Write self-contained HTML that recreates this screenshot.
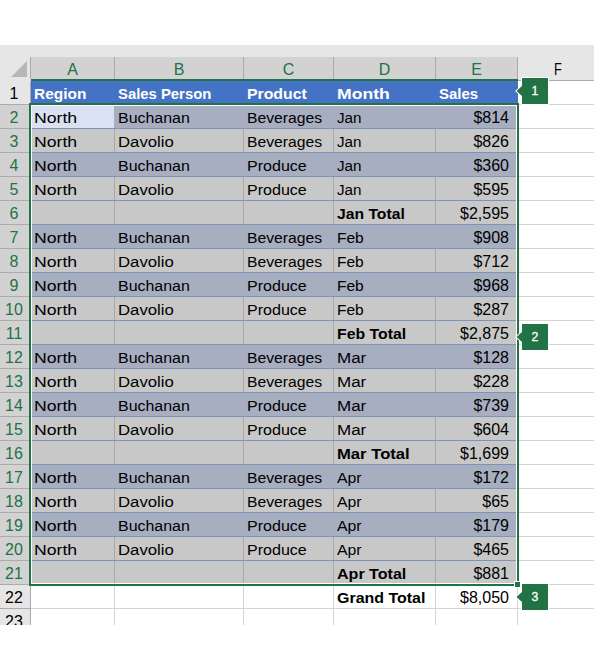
<!DOCTYPE html>
<html><head><meta charset="utf-8"><title>Sheet</title>
<style>
html,body{margin:0;padding:0;background:#fff;}
body{width:608px;height:656px;position:relative;overflow:hidden;font-family:"Liberation Sans",sans-serif;color:#000;}
.a{position:absolute;}
.t{position:absolute;white-space:nowrap;font-size:15.5px;line-height:24px;height:24px;}
.n{font-size:16px;text-align:right;}
.b{font-weight:bold;font-size:15px;}
.rh{position:absolute;left:0;width:28px;text-align:center;font-size:16px;line-height:24px;height:24px;}
.ch{position:absolute;top:57px;height:22px;line-height:25px;text-align:center;font-size:16px;color:#217346;}
.g{color:#217346;}
.bn{width:26px;height:26px;line-height:27px;text-align:center;color:#fff;font-size:12.3px;-webkit-text-stroke:0.3px #fff;}
</style></head><body>

<div class="a" style="left:0;top:45px;width:594px;height:36px;background:#e6e6e6"></div>
<div class="a" style="left:31px;top:57px;width:486px;height:22px;background:#d2d2d2"></div>
<div class="a" style="left:518px;top:80px;width:76px;height:1px;background:#ababab"></div>
<div class="a" style="left:30px;top:57px;width:1px;height:22px;background:#ababab"></div>
<div class="a" style="left:114px;top:57px;width:1px;height:22px;background:#ababab"></div>
<div class="a" style="left:243px;top:57px;width:1px;height:22px;background:#ababab"></div>
<div class="a" style="left:333px;top:57px;width:1px;height:22px;background:#ababab"></div>
<div class="a" style="left:435px;top:57px;width:1px;height:22px;background:#ababab"></div>
<div class="a" style="left:517px;top:57px;width:1px;height:22px;background:#ababab"></div>
<div class="a" style="left:31px;top:79px;width:487px;height:2px;background:#217346"></div>
<svg class="a" style="left:0;top:45px" width="30" height="36"><polygon points="11,32 27,16 27,32" fill="#b7b7b7"/></svg>
<div class="ch" style="left:31px;width:83px;color:#217346;">A</div>
<div class="ch" style="left:115px;width:128px;color:#217346;">B</div>
<div class="ch" style="left:244px;width:89px;color:#217346;">C</div>
<div class="ch" style="left:334px;width:101px;color:#217346;">D</div>
<div class="ch" style="left:436px;width:81px;color:#217346;">E</div>
<div class="ch" style="left:518px;width:76px;color:#000;transform:scaleX(0.8);left:519.5px;">F</div>
<div class="a" style="left:0;top:81px;width:30px;height:544px;background:#e6e6e6"></div>
<div class="a" style="left:0;top:105px;width:30px;height:479px;background:#d2d2d2"></div>
<div class="a" style="left:30px;top:81px;width:1px;height:544px;background:#ababab"></div>
<div class="a" style="left:31px;top:104px;width:563px;height:1px;background:#d4d4d4"></div>
<div class="a" style="left:31px;top:128px;width:563px;height:1px;background:#d4d4d4"></div>
<div class="a" style="left:31px;top:152px;width:563px;height:1px;background:#d4d4d4"></div>
<div class="a" style="left:31px;top:176px;width:563px;height:1px;background:#d4d4d4"></div>
<div class="a" style="left:31px;top:200px;width:563px;height:1px;background:#d4d4d4"></div>
<div class="a" style="left:31px;top:224px;width:563px;height:1px;background:#d4d4d4"></div>
<div class="a" style="left:31px;top:248px;width:563px;height:1px;background:#d4d4d4"></div>
<div class="a" style="left:31px;top:272px;width:563px;height:1px;background:#d4d4d4"></div>
<div class="a" style="left:31px;top:296px;width:563px;height:1px;background:#d4d4d4"></div>
<div class="a" style="left:31px;top:320px;width:563px;height:1px;background:#d4d4d4"></div>
<div class="a" style="left:31px;top:344px;width:563px;height:1px;background:#d4d4d4"></div>
<div class="a" style="left:31px;top:368px;width:563px;height:1px;background:#d4d4d4"></div>
<div class="a" style="left:31px;top:392px;width:563px;height:1px;background:#d4d4d4"></div>
<div class="a" style="left:31px;top:416px;width:563px;height:1px;background:#d4d4d4"></div>
<div class="a" style="left:31px;top:440px;width:563px;height:1px;background:#d4d4d4"></div>
<div class="a" style="left:31px;top:464px;width:563px;height:1px;background:#d4d4d4"></div>
<div class="a" style="left:31px;top:488px;width:563px;height:1px;background:#d4d4d4"></div>
<div class="a" style="left:31px;top:512px;width:563px;height:1px;background:#d4d4d4"></div>
<div class="a" style="left:31px;top:536px;width:563px;height:1px;background:#d4d4d4"></div>
<div class="a" style="left:31px;top:560px;width:563px;height:1px;background:#d4d4d4"></div>
<div class="a" style="left:31px;top:584px;width:563px;height:1px;background:#d4d4d4"></div>
<div class="a" style="left:31px;top:608px;width:563px;height:1px;background:#d4d4d4"></div>
<div class="a" style="left:114px;top:81px;width:1px;height:544px;background:#d4d4d4"></div>
<div class="a" style="left:243px;top:81px;width:1px;height:544px;background:#d4d4d4"></div>
<div class="a" style="left:333px;top:81px;width:1px;height:544px;background:#d4d4d4"></div>
<div class="a" style="left:435px;top:81px;width:1px;height:544px;background:#d4d4d4"></div>
<div class="a" style="left:517px;top:81px;width:1px;height:544px;background:#d4d4d4"></div>
<div class="a" style="left:0;top:104px;width:30px;height:1px;background:#ababab"></div>
<div class="a" style="left:0;top:128px;width:30px;height:1px;background:#ababab"></div>
<div class="a" style="left:0;top:152px;width:30px;height:1px;background:#ababab"></div>
<div class="a" style="left:0;top:176px;width:30px;height:1px;background:#ababab"></div>
<div class="a" style="left:0;top:200px;width:30px;height:1px;background:#ababab"></div>
<div class="a" style="left:0;top:224px;width:30px;height:1px;background:#ababab"></div>
<div class="a" style="left:0;top:248px;width:30px;height:1px;background:#ababab"></div>
<div class="a" style="left:0;top:272px;width:30px;height:1px;background:#ababab"></div>
<div class="a" style="left:0;top:296px;width:30px;height:1px;background:#ababab"></div>
<div class="a" style="left:0;top:320px;width:30px;height:1px;background:#ababab"></div>
<div class="a" style="left:0;top:344px;width:30px;height:1px;background:#ababab"></div>
<div class="a" style="left:0;top:368px;width:30px;height:1px;background:#ababab"></div>
<div class="a" style="left:0;top:392px;width:30px;height:1px;background:#ababab"></div>
<div class="a" style="left:0;top:416px;width:30px;height:1px;background:#ababab"></div>
<div class="a" style="left:0;top:440px;width:30px;height:1px;background:#ababab"></div>
<div class="a" style="left:0;top:464px;width:30px;height:1px;background:#ababab"></div>
<div class="a" style="left:0;top:488px;width:30px;height:1px;background:#ababab"></div>
<div class="a" style="left:0;top:512px;width:30px;height:1px;background:#ababab"></div>
<div class="a" style="left:0;top:536px;width:30px;height:1px;background:#ababab"></div>
<div class="a" style="left:0;top:560px;width:30px;height:1px;background:#ababab"></div>
<div class="a" style="left:0;top:584px;width:30px;height:1px;background:#ababab"></div>
<div class="a" style="left:0;top:608px;width:30px;height:1px;background:#ababab"></div>
<div class="a" style="left:31px;top:81px;width:487px;height:22px;background:#4472c4"></div>
<div class="a" style="left:31px;top:105px;width:486px;height:23px;background:#a7aec0"></div>
<div class="a" style="left:31px;top:128px;width:486px;height:1px;background:#7c93bb"></div>
<div class="a" style="left:31px;top:129px;width:486px;height:23px;background:#c8c8c8"></div>
<div class="a" style="left:114px;top:129px;width:1px;height:23px;background:#a9a9a9"></div>
<div class="a" style="left:243px;top:129px;width:1px;height:23px;background:#a9a9a9"></div>
<div class="a" style="left:333px;top:129px;width:1px;height:23px;background:#a9a9a9"></div>
<div class="a" style="left:435px;top:129px;width:1px;height:23px;background:#a9a9a9"></div>
<div class="a" style="left:31px;top:152px;width:486px;height:1px;background:#7c93bb"></div>
<div class="a" style="left:31px;top:153px;width:486px;height:23px;background:#a7aec0"></div>
<div class="a" style="left:31px;top:176px;width:486px;height:1px;background:#7c93bb"></div>
<div class="a" style="left:31px;top:177px;width:486px;height:23px;background:#c8c8c8"></div>
<div class="a" style="left:114px;top:177px;width:1px;height:23px;background:#a9a9a9"></div>
<div class="a" style="left:243px;top:177px;width:1px;height:23px;background:#a9a9a9"></div>
<div class="a" style="left:333px;top:177px;width:1px;height:23px;background:#a9a9a9"></div>
<div class="a" style="left:435px;top:177px;width:1px;height:23px;background:#a9a9a9"></div>
<div class="a" style="left:31px;top:200px;width:486px;height:1px;background:#7c93bb"></div>
<div class="a" style="left:31px;top:201px;width:486px;height:23px;background:#c8c8c8"></div>
<div class="a" style="left:114px;top:201px;width:1px;height:23px;background:#a9a9a9"></div>
<div class="a" style="left:243px;top:201px;width:1px;height:23px;background:#a9a9a9"></div>
<div class="a" style="left:333px;top:201px;width:1px;height:23px;background:#a9a9a9"></div>
<div class="a" style="left:435px;top:201px;width:1px;height:23px;background:#a9a9a9"></div>
<div class="a" style="left:31px;top:224px;width:486px;height:1px;background:#7c93bb"></div>
<div class="a" style="left:31px;top:225px;width:486px;height:23px;background:#a7aec0"></div>
<div class="a" style="left:31px;top:248px;width:486px;height:1px;background:#7c93bb"></div>
<div class="a" style="left:31px;top:249px;width:486px;height:23px;background:#c8c8c8"></div>
<div class="a" style="left:114px;top:249px;width:1px;height:23px;background:#a9a9a9"></div>
<div class="a" style="left:243px;top:249px;width:1px;height:23px;background:#a9a9a9"></div>
<div class="a" style="left:333px;top:249px;width:1px;height:23px;background:#a9a9a9"></div>
<div class="a" style="left:435px;top:249px;width:1px;height:23px;background:#a9a9a9"></div>
<div class="a" style="left:31px;top:272px;width:486px;height:1px;background:#7c93bb"></div>
<div class="a" style="left:31px;top:273px;width:486px;height:23px;background:#a7aec0"></div>
<div class="a" style="left:31px;top:296px;width:486px;height:1px;background:#7c93bb"></div>
<div class="a" style="left:31px;top:297px;width:486px;height:23px;background:#c8c8c8"></div>
<div class="a" style="left:114px;top:297px;width:1px;height:23px;background:#a9a9a9"></div>
<div class="a" style="left:243px;top:297px;width:1px;height:23px;background:#a9a9a9"></div>
<div class="a" style="left:333px;top:297px;width:1px;height:23px;background:#a9a9a9"></div>
<div class="a" style="left:435px;top:297px;width:1px;height:23px;background:#a9a9a9"></div>
<div class="a" style="left:31px;top:320px;width:486px;height:1px;background:#7c93bb"></div>
<div class="a" style="left:31px;top:321px;width:486px;height:23px;background:#c8c8c8"></div>
<div class="a" style="left:114px;top:321px;width:1px;height:23px;background:#a9a9a9"></div>
<div class="a" style="left:243px;top:321px;width:1px;height:23px;background:#a9a9a9"></div>
<div class="a" style="left:333px;top:321px;width:1px;height:23px;background:#a9a9a9"></div>
<div class="a" style="left:435px;top:321px;width:1px;height:23px;background:#a9a9a9"></div>
<div class="a" style="left:31px;top:344px;width:486px;height:1px;background:#7c93bb"></div>
<div class="a" style="left:31px;top:345px;width:486px;height:23px;background:#a7aec0"></div>
<div class="a" style="left:31px;top:368px;width:486px;height:1px;background:#7c93bb"></div>
<div class="a" style="left:31px;top:369px;width:486px;height:23px;background:#c8c8c8"></div>
<div class="a" style="left:114px;top:369px;width:1px;height:23px;background:#a9a9a9"></div>
<div class="a" style="left:243px;top:369px;width:1px;height:23px;background:#a9a9a9"></div>
<div class="a" style="left:333px;top:369px;width:1px;height:23px;background:#a9a9a9"></div>
<div class="a" style="left:435px;top:369px;width:1px;height:23px;background:#a9a9a9"></div>
<div class="a" style="left:31px;top:392px;width:486px;height:1px;background:#7c93bb"></div>
<div class="a" style="left:31px;top:393px;width:486px;height:23px;background:#a7aec0"></div>
<div class="a" style="left:31px;top:416px;width:486px;height:1px;background:#7c93bb"></div>
<div class="a" style="left:31px;top:417px;width:486px;height:23px;background:#c8c8c8"></div>
<div class="a" style="left:114px;top:417px;width:1px;height:23px;background:#a9a9a9"></div>
<div class="a" style="left:243px;top:417px;width:1px;height:23px;background:#a9a9a9"></div>
<div class="a" style="left:333px;top:417px;width:1px;height:23px;background:#a9a9a9"></div>
<div class="a" style="left:435px;top:417px;width:1px;height:23px;background:#a9a9a9"></div>
<div class="a" style="left:31px;top:440px;width:486px;height:1px;background:#7c93bb"></div>
<div class="a" style="left:31px;top:441px;width:486px;height:23px;background:#c8c8c8"></div>
<div class="a" style="left:114px;top:441px;width:1px;height:23px;background:#a9a9a9"></div>
<div class="a" style="left:243px;top:441px;width:1px;height:23px;background:#a9a9a9"></div>
<div class="a" style="left:333px;top:441px;width:1px;height:23px;background:#a9a9a9"></div>
<div class="a" style="left:435px;top:441px;width:1px;height:23px;background:#a9a9a9"></div>
<div class="a" style="left:31px;top:464px;width:486px;height:1px;background:#7c93bb"></div>
<div class="a" style="left:31px;top:465px;width:486px;height:23px;background:#a7aec0"></div>
<div class="a" style="left:31px;top:488px;width:486px;height:1px;background:#7c93bb"></div>
<div class="a" style="left:31px;top:489px;width:486px;height:23px;background:#c8c8c8"></div>
<div class="a" style="left:114px;top:489px;width:1px;height:23px;background:#a9a9a9"></div>
<div class="a" style="left:243px;top:489px;width:1px;height:23px;background:#a9a9a9"></div>
<div class="a" style="left:333px;top:489px;width:1px;height:23px;background:#a9a9a9"></div>
<div class="a" style="left:435px;top:489px;width:1px;height:23px;background:#a9a9a9"></div>
<div class="a" style="left:31px;top:512px;width:486px;height:1px;background:#7c93bb"></div>
<div class="a" style="left:31px;top:513px;width:486px;height:23px;background:#a7aec0"></div>
<div class="a" style="left:31px;top:536px;width:486px;height:1px;background:#7c93bb"></div>
<div class="a" style="left:31px;top:537px;width:486px;height:23px;background:#c8c8c8"></div>
<div class="a" style="left:114px;top:537px;width:1px;height:23px;background:#a9a9a9"></div>
<div class="a" style="left:243px;top:537px;width:1px;height:23px;background:#a9a9a9"></div>
<div class="a" style="left:333px;top:537px;width:1px;height:23px;background:#a9a9a9"></div>
<div class="a" style="left:435px;top:537px;width:1px;height:23px;background:#a9a9a9"></div>
<div class="a" style="left:31px;top:560px;width:486px;height:1px;background:#7c93bb"></div>
<div class="a" style="left:31px;top:561px;width:486px;height:23px;background:#c8c8c8"></div>
<div class="a" style="left:114px;top:561px;width:1px;height:23px;background:#a9a9a9"></div>
<div class="a" style="left:243px;top:561px;width:1px;height:23px;background:#a9a9a9"></div>
<div class="a" style="left:333px;top:561px;width:1px;height:23px;background:#a9a9a9"></div>
<div class="a" style="left:435px;top:561px;width:1px;height:23px;background:#a9a9a9"></div>
<div class="a" style="left:32px;top:106px;width:82px;height:22px;background:#d9e1f2"></div>
<div class="a" style="left:29px;top:103px;width:486px;height:479px;border:2px solid #217346;"></div>
<div class="a" style="left:31px;top:105px;width:484px;height:477px;border:1px solid #fff;"></div>
<div class="a" style="left:514px;top:581px;width:5px;height:5px;border:1px solid #fff;background:#217346"></div>
<div class="rh" style="top:82px">1</div>
<div class="rh g" style="top:106px">2</div>
<div class="rh g" style="top:130px">3</div>
<div class="rh g" style="top:154px">4</div>
<div class="rh g" style="top:178px">5</div>
<div class="rh g" style="top:202px">6</div>
<div class="rh g" style="top:226px">7</div>
<div class="rh g" style="top:250px">8</div>
<div class="rh g" style="top:274px">9</div>
<div class="rh g" style="top:298px">10</div>
<div class="rh g" style="top:322px">11</div>
<div class="rh g" style="top:346px">12</div>
<div class="rh g" style="top:370px">13</div>
<div class="rh g" style="top:394px">14</div>
<div class="rh g" style="top:418px">15</div>
<div class="rh g" style="top:442px">16</div>
<div class="rh g" style="top:466px">17</div>
<div class="rh g" style="top:490px">18</div>
<div class="rh g" style="top:514px">19</div>
<div class="rh g" style="top:538px">20</div>
<div class="rh g" style="top:562px">21</div>
<div class="rh" style="top:586px">22</div>
<div class="rh" style="top:610px">23</div>
<div class="t b" style="left:34px;top:82px;color:#fff;transform:scaleX(1.0306);transform-origin:0 0;">Region</div>
<div class="t b" style="left:118px;top:82px;color:#fff;transform:scaleX(0.9900);transform-origin:0 0;">Sales Person</div>
<div class="t b" style="left:247px;top:82px;color:#fff;transform:scaleX(1.0536);transform-origin:0 0;">Product</div>
<div class="t b" style="left:337px;top:82px;color:#fff;transform:scaleX(1.1744);transform-origin:0 0;">Month</div>
<div class="t b" style="left:439px;top:82px;color:#fff;transform:scaleX(1.0000);transform-origin:0 0;">Sales</div>
<div class="t" style="left:34px;top:106px;transform:scaleX(1.1389);transform-origin:0 0;">North</div>
<div class="t" style="left:118px;top:106px;transform:scaleX(1.0294);transform-origin:0 0;">Buchanan</div>
<div class="t" style="left:247px;top:106px;transform:scaleX(1.0137);transform-origin:0 0;">Beverages</div>
<div class="t" style="left:337px;top:106px;transform:scaleX(0.9792);transform-origin:0 0;">Jan</div>
<div class="t n" style="left:435px;width:74px;top:106px">$814</div>
<div class="t" style="left:34px;top:130px;transform:scaleX(1.1389);transform-origin:0 0;">North</div>
<div class="t" style="left:118px;top:130px;transform:scaleX(1.0800);transform-origin:0 0;">Davolio</div>
<div class="t" style="left:247px;top:130px;transform:scaleX(1.0137);transform-origin:0 0;">Beverages</div>
<div class="t" style="left:337px;top:130px;transform:scaleX(0.9792);transform-origin:0 0;">Jan</div>
<div class="t n" style="left:435px;width:74px;top:130px">$826</div>
<div class="t" style="left:34px;top:154px;transform:scaleX(1.1389);transform-origin:0 0;">North</div>
<div class="t" style="left:118px;top:154px;transform:scaleX(1.0294);transform-origin:0 0;">Buchanan</div>
<div class="t" style="left:247px;top:154px;transform:scaleX(1.0357);transform-origin:0 0;">Produce</div>
<div class="t" style="left:337px;top:154px;transform:scaleX(0.9792);transform-origin:0 0;">Jan</div>
<div class="t n" style="left:435px;width:74px;top:154px">$360</div>
<div class="t" style="left:34px;top:178px;transform:scaleX(1.1389);transform-origin:0 0;">North</div>
<div class="t" style="left:118px;top:178px;transform:scaleX(1.0800);transform-origin:0 0;">Davolio</div>
<div class="t" style="left:247px;top:178px;transform:scaleX(1.0357);transform-origin:0 0;">Produce</div>
<div class="t" style="left:337px;top:178px;transform:scaleX(0.9792);transform-origin:0 0;">Jan</div>
<div class="t n" style="left:435px;width:74px;top:178px">$595</div>
<div class="t b" style="left:337px;top:202px;transform:scaleX(1.0469);transform-origin:0 0;">Jan Total</div>
<div class="t n" style="left:435px;width:74px;top:202px">$2,595</div>
<div class="t" style="left:34px;top:226px;transform:scaleX(1.1389);transform-origin:0 0;">North</div>
<div class="t" style="left:118px;top:226px;transform:scaleX(1.0294);transform-origin:0 0;">Buchanan</div>
<div class="t" style="left:247px;top:226px;transform:scaleX(1.0137);transform-origin:0 0;">Beverages</div>
<div class="t" style="left:337px;top:226px;transform:scaleX(1.0000);transform-origin:0 0;">Feb</div>
<div class="t n" style="left:435px;width:74px;top:226px">$908</div>
<div class="t" style="left:34px;top:250px;transform:scaleX(1.1389);transform-origin:0 0;">North</div>
<div class="t" style="left:118px;top:250px;transform:scaleX(1.0800);transform-origin:0 0;">Davolio</div>
<div class="t" style="left:247px;top:250px;transform:scaleX(1.0137);transform-origin:0 0;">Beverages</div>
<div class="t" style="left:337px;top:250px;transform:scaleX(1.0000);transform-origin:0 0;">Feb</div>
<div class="t n" style="left:435px;width:74px;top:250px">$712</div>
<div class="t" style="left:34px;top:274px;transform:scaleX(1.1389);transform-origin:0 0;">North</div>
<div class="t" style="left:118px;top:274px;transform:scaleX(1.0294);transform-origin:0 0;">Buchanan</div>
<div class="t" style="left:247px;top:274px;transform:scaleX(1.0357);transform-origin:0 0;">Produce</div>
<div class="t" style="left:337px;top:274px;transform:scaleX(1.0000);transform-origin:0 0;">Feb</div>
<div class="t n" style="left:435px;width:74px;top:274px">$968</div>
<div class="t" style="left:34px;top:298px;transform:scaleX(1.1389);transform-origin:0 0;">North</div>
<div class="t" style="left:118px;top:298px;transform:scaleX(1.0800);transform-origin:0 0;">Davolio</div>
<div class="t" style="left:247px;top:298px;transform:scaleX(1.0357);transform-origin:0 0;">Produce</div>
<div class="t" style="left:337px;top:298px;transform:scaleX(1.0000);transform-origin:0 0;">Feb</div>
<div class="t n" style="left:435px;width:74px;top:298px">$287</div>
<div class="t b" style="left:337px;top:322px;transform:scaleX(1.0547);transform-origin:0 0;">Feb Total</div>
<div class="t n" style="left:435px;width:74px;top:322px">$2,875</div>
<div class="t" style="left:34px;top:346px;transform:scaleX(1.1389);transform-origin:0 0;">North</div>
<div class="t" style="left:118px;top:346px;transform:scaleX(1.0294);transform-origin:0 0;">Buchanan</div>
<div class="t" style="left:247px;top:346px;transform:scaleX(1.0137);transform-origin:0 0;">Beverages</div>
<div class="t" style="left:337px;top:346px;transform:scaleX(1.0962);transform-origin:0 0;">Mar</div>
<div class="t n" style="left:435px;width:74px;top:346px">$128</div>
<div class="t" style="left:34px;top:370px;transform:scaleX(1.1389);transform-origin:0 0;">North</div>
<div class="t" style="left:118px;top:370px;transform:scaleX(1.0800);transform-origin:0 0;">Davolio</div>
<div class="t" style="left:247px;top:370px;transform:scaleX(1.0137);transform-origin:0 0;">Beverages</div>
<div class="t" style="left:337px;top:370px;transform:scaleX(1.0962);transform-origin:0 0;">Mar</div>
<div class="t n" style="left:435px;width:74px;top:370px">$228</div>
<div class="t" style="left:34px;top:394px;transform:scaleX(1.1389);transform-origin:0 0;">North</div>
<div class="t" style="left:118px;top:394px;transform:scaleX(1.0294);transform-origin:0 0;">Buchanan</div>
<div class="t" style="left:247px;top:394px;transform:scaleX(1.0357);transform-origin:0 0;">Produce</div>
<div class="t" style="left:337px;top:394px;transform:scaleX(1.0962);transform-origin:0 0;">Mar</div>
<div class="t n" style="left:435px;width:74px;top:394px">$739</div>
<div class="t" style="left:34px;top:418px;transform:scaleX(1.1389);transform-origin:0 0;">North</div>
<div class="t" style="left:118px;top:418px;transform:scaleX(1.0800);transform-origin:0 0;">Davolio</div>
<div class="t" style="left:247px;top:418px;transform:scaleX(1.0357);transform-origin:0 0;">Produce</div>
<div class="t" style="left:337px;top:418px;transform:scaleX(1.0962);transform-origin:0 0;">Mar</div>
<div class="t n" style="left:435px;width:74px;top:418px">$604</div>
<div class="t b" style="left:337px;top:442px;transform:scaleX(1.1094);transform-origin:0 0;">Mar Total</div>
<div class="t n" style="left:435px;width:74px;top:442px">$1,699</div>
<div class="t" style="left:34px;top:466px;transform:scaleX(1.1389);transform-origin:0 0;">North</div>
<div class="t" style="left:118px;top:466px;transform:scaleX(1.0294);transform-origin:0 0;">Buchanan</div>
<div class="t" style="left:247px;top:466px;transform:scaleX(1.0137);transform-origin:0 0;">Beverages</div>
<div class="t" style="left:337px;top:466px;transform:scaleX(1.0208);transform-origin:0 0;">Apr</div>
<div class="t n" style="left:435px;width:74px;top:466px">$172</div>
<div class="t" style="left:34px;top:490px;transform:scaleX(1.1389);transform-origin:0 0;">North</div>
<div class="t" style="left:118px;top:490px;transform:scaleX(1.0800);transform-origin:0 0;">Davolio</div>
<div class="t" style="left:247px;top:490px;transform:scaleX(1.0137);transform-origin:0 0;">Beverages</div>
<div class="t" style="left:337px;top:490px;transform:scaleX(1.0208);transform-origin:0 0;">Apr</div>
<div class="t n" style="left:435px;width:74px;top:490px">$65</div>
<div class="t" style="left:34px;top:514px;transform:scaleX(1.1389);transform-origin:0 0;">North</div>
<div class="t" style="left:118px;top:514px;transform:scaleX(1.0294);transform-origin:0 0;">Buchanan</div>
<div class="t" style="left:247px;top:514px;transform:scaleX(1.0357);transform-origin:0 0;">Produce</div>
<div class="t" style="left:337px;top:514px;transform:scaleX(1.0208);transform-origin:0 0;">Apr</div>
<div class="t n" style="left:435px;width:74px;top:514px">$179</div>
<div class="t" style="left:34px;top:538px;transform:scaleX(1.1389);transform-origin:0 0;">North</div>
<div class="t" style="left:118px;top:538px;transform:scaleX(1.0800);transform-origin:0 0;">Davolio</div>
<div class="t" style="left:247px;top:538px;transform:scaleX(1.0357);transform-origin:0 0;">Produce</div>
<div class="t" style="left:337px;top:538px;transform:scaleX(1.0208);transform-origin:0 0;">Apr</div>
<div class="t n" style="left:435px;width:74px;top:538px">$465</div>
<div class="t b" style="left:337px;top:562px;transform:scaleX(1.0703);transform-origin:0 0;">Apr Total</div>
<div class="t n" style="left:435px;width:74px;top:562px">$881</div>
<div class="t b" style="left:337px;top:586px;transform:scaleX(1.0640);transform-origin:0 0;">Grand Total</div>
<div class="t n" style="left:435px;width:74px;top:586px">$8,050</div>
<svg class="a" style="left:514px;top:76px" width="38" height="32"><path d="M8,2 H34 V28 H8 V20 L2.5,15 L8,10 Z" fill="#217346" stroke="#fff" stroke-width="2" paint-order="stroke" stroke-linejoin="miter"/></svg>
<div class="a bn" style="left:522px;top:78px">1</div>
<svg class="a" style="left:514px;top:322px" width="38" height="32"><path d="M8,2 H34 V28 H8 V20 L2.5,15 L8,10 Z" fill="#217346" stroke="#fff" stroke-width="2" paint-order="stroke" stroke-linejoin="miter"/></svg>
<div class="a bn" style="left:522px;top:324px">2</div>
<svg class="a" style="left:514px;top:582px" width="38" height="32"><path d="M8,2 H34 V28 H8 V20 L2.5,15 L8,10 Z" fill="#217346" stroke="#fff" stroke-width="2" paint-order="stroke" stroke-linejoin="miter"/></svg>
<div class="a bn" style="left:522px;top:584px">3</div>
<div class="a" style="left:0;top:625px;width:608px;height:31px;background:#fff"></div>
<div class="a" style="left:594px;top:0;width:14px;height:656px;background:#fff"></div>
</body></html>
